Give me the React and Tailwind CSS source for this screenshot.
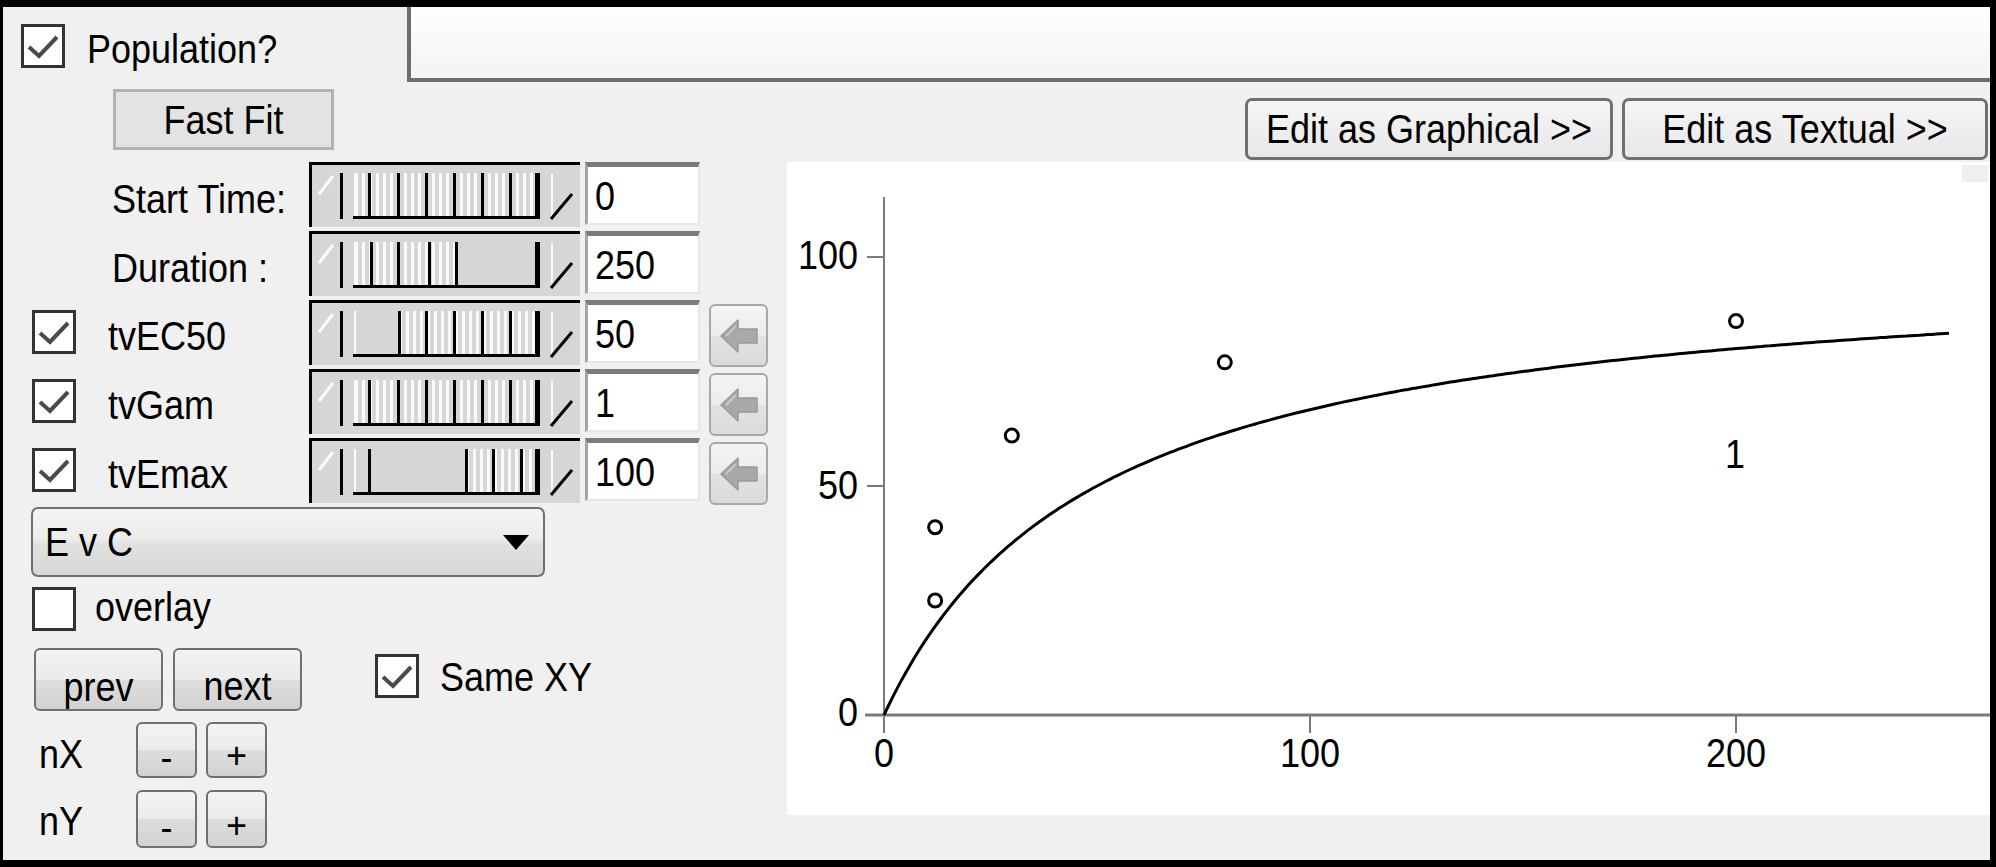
import React from "react";

const sliders = [
  { label: "Start Time:", check: false, value: "0", stripes: [44, 226], ticks: [59, 88, 116, 144, 172, 200] },
  { label: "Duration :", check: false, value: "250", stripes: [44, 148], ticks: [61, 88, 119, 146] },
  { label: "tvEC50", check: true, value: "50", stripes: [88, 226], ticks: [89, 116, 144, 172, 200] },
  { label: "tvGam", check: true, value: "1", stripes: [44, 226], ticks: [59, 88, 116, 144, 172, 200] },
  { label: "tvEmax", check: true, value: "100", stripes: [155, 226], ticks: [59, 156, 183, 211] },
];

// the screenshot's font is taller than Arial at the same width
function T({ children, className = "" }) {
  return <span className={`inline-block scale-y-[1.13] ${className}`}>{children}</span>;
}

function CheckBox({ checked, className = "" }) {
  return (
    <div className={`w-[44px] h-[44px] shrink-0 border-[3px] border-[#333333] bg-white ${className}`}>
      {checked && (
        <svg width="38" height="38" className="block">
          <path d="M5 20 L15 29 L33 10" fill="none" stroke="#4a4a4a" strokeWidth="4" />
        </svg>
      )}
    </div>
  );
}

function Slider({ stripes, ticks }) {
  const whites = [];
  for (let x = stripes[0] + 2; x < stripes[1] - 2; x += 7) whites.push(x);
  return (
    <svg width="271" height="65" className="block shrink-0">
      <rect x="0" y="0" width="271" height="65" fill="#d6d6d6" />
      <rect x="0" y="0" width="271" height="3" fill="#000" />
      <rect x="0" y="0" width="3" height="65" fill="#000" />
      <line x1="10" y1="32" x2="24" y2="14" stroke="#fbfbfb" strokeWidth="3" />
      <rect x="31" y="11" width="3" height="46" fill="#000" />
      <rect x="45" y="11" width="2" height="43" fill="#fafafa" />
      {whites.map((x) => (
        <rect key={x} x={x} y="11" width="3" height="43" fill="#fafafa" />
      ))}
      {ticks.map((x) => (
        <rect key={"t" + x} x={x} y="11" width="3" height="45" fill="#000" />
      ))}
      <rect x="226" y="11" width="5" height="46" fill="#000" />
      <rect x="44" y="54" width="187" height="3" fill="#000" />
      <rect x="242" y="12" width="2" height="45" fill="#fafafa" />
      <line x1="242" y1="57" x2="263" y2="32" stroke="#000" strokeWidth="3" />
    </svg>
  );
}

function ArrowButton() {
  return (
    <div className="ml-[9px] mt-[4px] w-[59px] h-[63px] shrink-0 rounded-[6px] border-2 border-[#a8a8a8] bg-[linear-gradient(180deg,#f4f4f4_0%,#ececec_50%,#e2e2e2_51%,#dadada_100%)] flex items-center justify-center">
      <svg width="40" height="36" className="block">
        <path d="M2 18 L19 2 L19 11 L38 11 L38 25 L19 25 L19 34 Z" fill="#a9a9a9" stroke="#999999" strokeWidth="1.5" strokeLinejoin="round" />
        <path d="M7 18 L17 8" stroke="#c8c8c8" strokeWidth="2" />
      </svg>
    </div>
  );
}

function Row({ label, check, value, stripes, ticks }) {
  return (
    <div className="flex items-start h-[65px]">
      <div className="w-[306px] h-full flex items-start shrink-0">
        {check ? (
          <>
            <CheckBox checked className="ml-[29px] mt-[10px]" />
            <T className="ml-[32px] mt-[18px]">{label}</T>
          </>
        ) : (
          <T className="ml-[109px] mt-[19px]">{label}</T>
        )}
      </div>
      <Slider stripes={stripes} ticks={ticks} />
      <div className="ml-[5px] w-[115px] h-[63px] shrink-0 bg-white border-t-[5px] border-t-[#7c7c7c] border-l-[3px] border-l-[#a5a5a5] border-r-2 border-r-[#e6e6e6] border-b-2 border-b-[#e6e6e6] flex items-center pl-[7px] pt-[2px]">
        <T>{value}</T>
      </div>
      {check && <ArrowButton />}
    </div>
  );
}

const win7 =
  "rounded-[6px] border-2 border-[#707070] bg-[linear-gradient(180deg,#f3f3f3_0%,#ebebeb_50%,#dddddd_51%,#d2d2d2_100%)]";

function LeftPanel() {
  return (
    <div className="w-[784px] shrink-0 flex flex-col">
      <div className="ml-[110px] mt-[7px] w-[221px] h-[61px] bg-[#e3e3e3] border-[3px] border-[#b3b3b3] flex items-center justify-center">
        <T>Fast Fit</T>
      </div>
      <div className="mt-[12px] flex flex-col gap-[4px]">
        {sliders.map((s) => (
          <Row key={s.label} {...s} />
        ))}
      </div>
      <div className="mt-[4px] ml-[28px] w-[514px] h-[70px] rounded-[7px] border-2 border-[#707070] bg-[linear-gradient(180deg,#f4f4f4_0%,#ececec_45%,#e0e0e0_55%,#d8d8d8_100%)] flex items-center pl-[12px]">
        <span className="flex-1">
          <T>E v C</T>
        </span>
        <svg width="26" height="15" className="block mr-[14px]">
          <path d="M0 0 L26 0 L13 15 Z" fill="#000" />
        </svg>
      </div>
      <div className="mt-[10px] ml-[29px] flex items-center h-[44px]">
        <CheckBox />
        <T className="ml-[19px] mb-[4px]">overlay</T>
      </div>
      <div className="mt-[17px] ml-[31px] flex items-start h-[63px]">
        <div className={`w-[129px] h-[63px] ${win7} flex justify-center pt-[20px]`}>
          <T>prev</T>
        </div>
        <div className={`ml-[10px] w-[129px] h-[63px] ${win7} flex justify-center pt-[19px]`}>
          <T>next</T>
        </div>
        <CheckBox checked className="ml-[73px] mt-[6px]" />
        <T className="ml-[21px] mt-[11px]">Same XY</T>
      </div>
      <div className="mt-[11px] flex items-start h-[56px]">
        <T className="w-[133px] shrink-0 pl-[36px] mt-[14px]">nX</T>
        <div className={`w-[61px] h-[56px] ${win7} flex justify-center pt-[16px]`}>-</div>
        <div className={`ml-[9px] w-[61px] h-[56px] ${win7} flex justify-center pt-[14px]`}>+</div>
      </div>
      <div className="mt-[12px] flex items-start h-[58px]">
        <T className="w-[133px] shrink-0 pl-[36px] mt-[13px]">nY</T>
        <div className={`w-[61px] h-[58px] ${win7} flex justify-center pt-[18px]`}>-</div>
        <div className={`ml-[9px] w-[61px] h-[58px] ${win7} flex justify-center pt-[16px]`}>+</div>
      </div>
    </div>
  );
}

function Label({ x, y, anchor, children }) {
  // y is the visual centre of the digits
  return (
    <text
      transform={`translate(${x} ${y}) scale(1 1.13)`}
      x="0"
      y="13"
      textAnchor={anchor}
      style={{ fontFamily: '"Liberation Sans", Arial, sans-serif', fontSize: 36 }}
    >
      {children}
    </text>
  );
}

function Plot() {
  const sx = (c) => 97 + c * 4.26;
  const sy = (e) => 553 - e * 4.58;
  const pts = [];
  for (let c = 0; c <= 250; c += 1) {
    pts.push(`${sx(c).toFixed(1)},${sy((100 * c) / (50 + c)).toFixed(1)}`);
  }
  const data = [
    [12, 41],
    [12, 25],
    [30, 61],
    [80, 77],
    [200, 86],
  ];
  return (
    <svg width="1203" height="653" className="block">
      <rect x="1175" y="3" width="26" height="17" fill="#efefef" />
      <line x1="97" y1="35" x2="97" y2="553" stroke="#7a7a7a" strokeWidth="2" />
      <line x1="78" y1="553" x2="1203" y2="553" stroke="#7a7a7a" strokeWidth="3" />
      {[0, 50, 100].map((v) => (
        <line key={v} x1="80" x2="97" y1={sy(v)} y2={sy(v)} stroke="#7a7a7a" strokeWidth="2" />
      ))}
      {[0, 100, 200].map((v) => (
        <line key={v} x1={sx(v)} x2={sx(v)} y1="553" y2="571" stroke="#7a7a7a" strokeWidth="2" />
      ))}
      <Label x={71} y={92} anchor="end">100</Label>
      <Label x={71} y={322} anchor="end">50</Label>
      <Label x={71} y={549} anchor="end">0</Label>
      <Label x={sx(0)} y={590} anchor="middle">0</Label>
      <Label x={sx(100)} y={590} anchor="middle">100</Label>
      <Label x={sx(200)} y={590} anchor="middle">200</Label>
      <polyline points={pts.join(" ")} fill="none" stroke="#000" strokeWidth="3" />
      {data.map(([c, e], i) => (
        <circle key={i} cx={sx(c)} cy={sy(e)} r="6.5" fill="none" stroke="#000" strokeWidth="3" />
      ))}
      <Label x={948} y={291} anchor="middle">1</Label>
    </svg>
  );
}

function RightPanel() {
  return (
    <div className="flex-1 flex flex-col">
      <div className="mt-[16px] pr-[2px] flex justify-end gap-[9px]">
        <div className="w-[368px] h-[62px] rounded-[7px] border-[3px] border-[#707070] bg-[linear-gradient(180deg,#f5f5f5,#e8e8e8)] flex items-center justify-center">
          <T>Edit as Graphical &gt;&gt;</T>
        </div>
        <div className="w-[366px] h-[62px] rounded-[7px] border-[3px] border-[#707070] bg-[linear-gradient(180deg,#f5f5f5,#e8e8e8)] flex items-center justify-center">
          <T>Edit as Textual &gt;&gt;</T>
        </div>
      </div>
      <div className="mt-[2px] h-[653px] bg-white">
        <Plot />
      </div>
    </div>
  );
}

export default function App() {
  return (
    <div className="w-[1996px] h-[867px] overflow-hidden bg-[#f0f0f0] border-t-[7px] border-l-[3px] border-r-[6px] border-b-[7px] border-black flex flex-col font-['Liberation_Sans',Arial,sans-serif] text-[36px] leading-none text-black">
      <div className="flex h-[75px] shrink-0">
        <div className="w-[404px] shrink-0 flex items-center pl-[18px] pt-[2px]">
          <CheckBox checked />
          <T className="ml-[22px] mt-[6px]">Population?</T>
        </div>
        <div className="flex-1 border-l-4 border-b-4 border-[#6d6d6d] bg-[linear-gradient(180deg,#fefefe,#f4f4f4)]" />
      </div>
      <div className="flex flex-1">
        <LeftPanel />
        <RightPanel />
      </div>
    </div>
  );
}
